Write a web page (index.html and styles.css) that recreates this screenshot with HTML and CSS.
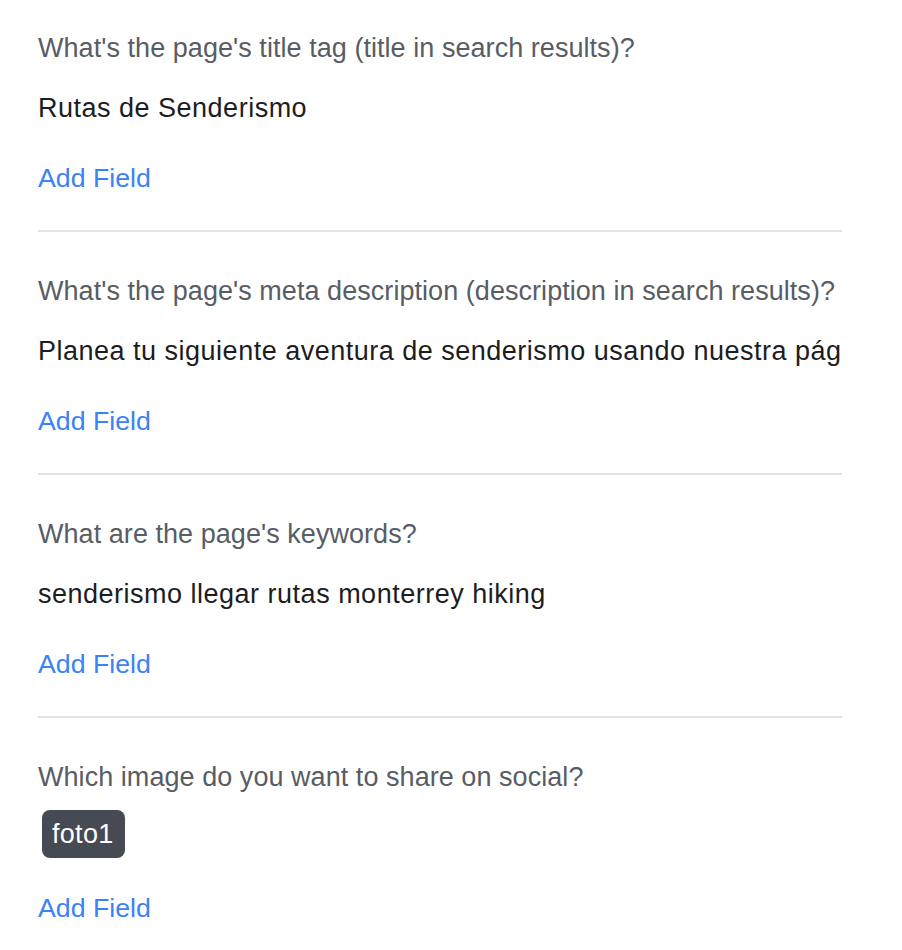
FILE: index.html
```html
<!DOCTYPE html>
<html>
<head>
<meta charset="utf-8">
<link rel="stylesheet" href="styles.css">
</head>
<body>
<div class="form">
  <section class="field">
    <div class="label">What's the page's title tag (title in search results)?</div>
    <div class="value">Rutas de Senderismo</div>
    <a class="add">Add Field</a>
  </section>
  <section class="field">
    <div class="label">What's the page's meta description (description in search results)?</div>
    <div class="value">Planea tu siguiente aventura de senderismo usando nuestra pág</div>
    <a class="add">Add Field</a>
  </section>
  <section class="field">
    <div class="label">What are the page's keywords?</div>
    <div class="value">senderismo llegar rutas monterrey hiking</div>
    <a class="add">Add Field</a>
  </section>
  <section class="field last">
    <div class="label">Which image do you want to share on social?</div>
    <div class="chips"><span class="chip">foto1</span></div>
    <a class="add">Add Field</a>
  </section>
</div>
</body>
</html>
```
FILE: styles.css
```css
html, body {
  margin: 0;
  padding: 0;
  background: #ffffff;
}
body {
  font-family: "Liberation Sans", Arial, sans-serif;
  font-size: 26px;
  line-height: 30px;
}
.form {
  width: 804px;
  padding: 33px 0 0 38px;
  display: flex;
  flex-direction: column;
}
.field {
  display: flex;
  flex-direction: column;
  align-items: flex-start;
  border-bottom: 2px solid #e3e3e5;
  padding-bottom: 37px;
  margin-bottom: 44px;
}
.field.last {
  border-bottom: none;
  padding-bottom: 0;
  margin-bottom: 0;
}
.label {
  color: #585d65;
  font-size: 27px;
  letter-spacing: 0.05px;
  white-space: nowrap;
}
.value {
  color: #1d1d1f;
  font-size: 27px;
  letter-spacing: 0.5px;
  margin-top: 30px;
  white-space: nowrap;
  overflow: hidden;
  width: 804px;
}
.add {
  color: #3b82f6;
  font-size: 26.7px;
  margin-top: 40px;
  cursor: pointer;
}
.chips {
  margin-top: 18px;
  margin-left: 4px;
  display: flex;
}
.chip {
  background: #464a52;
  color: #ffffff;
  font-size: 27px;
  letter-spacing: 0.3px;
  border-radius: 8px;
  height: 48px;
  line-height: 48px;
  padding: 0 11px 0 10px;
}
.chips + .add {
  margin-top: 35px;
}
```
